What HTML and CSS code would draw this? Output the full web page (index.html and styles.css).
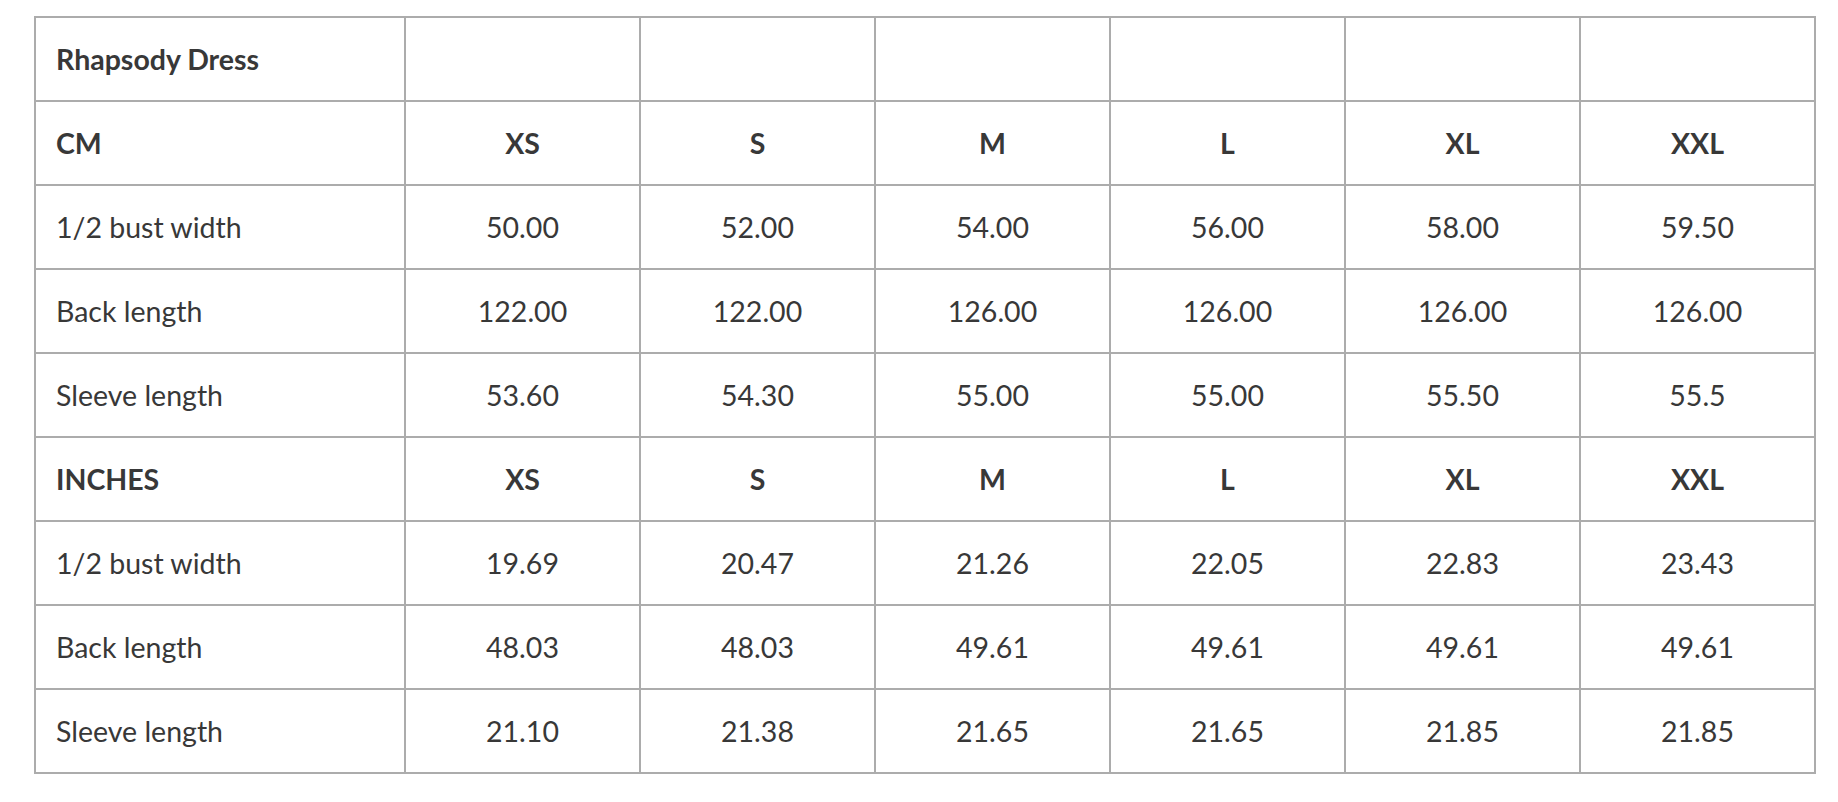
FILE: index.html
```html
<!DOCTYPE html>
<html>
<head>
<meta charset="utf-8">
<link rel="stylesheet" href="styles.css">
</head>
<body>
<div class="page">
<table class="size-table">
  <colgroup>
    <col class="c-label"><col class="c-size"><col class="c-size"><col class="c-size"><col class="c-size"><col class="c-size"><col class="c-size">
  </colgroup>
  <tbody>
    <tr><td class="head">Rhapsody Dress</td><td></td><td></td><td></td><td></td><td></td><td></td></tr>
    <tr class="head-row"><td>CM</td><td>XS</td><td>S</td><td>M</td><td>L</td><td>XL</td><td>XXL</td></tr>
    <tr><td>1/2 bust width</td><td>50.00</td><td>52.00</td><td>54.00</td><td>56.00</td><td>58.00</td><td>59.50</td></tr>
    <tr><td>Back length</td><td>122.00</td><td>122.00</td><td>126.00</td><td>126.00</td><td>126.00</td><td>126.00</td></tr>
    <tr><td>Sleeve length</td><td>53.60</td><td>54.30</td><td>55.00</td><td>55.00</td><td>55.50</td><td>55.5</td></tr>
    <tr class="head-row"><td>INCHES</td><td>XS</td><td>S</td><td>M</td><td>L</td><td>XL</td><td>XXL</td></tr>
    <tr><td>1/2 bust width</td><td>19.69</td><td>20.47</td><td>21.26</td><td>22.05</td><td>22.83</td><td>23.43</td></tr>
    <tr><td>Back length</td><td>48.03</td><td>48.03</td><td>49.61</td><td>49.61</td><td>49.61</td><td>49.61</td></tr>
    <tr><td>Sleeve length</td><td>21.10</td><td>21.38</td><td>21.65</td><td>21.65</td><td>21.85</td><td>21.85</td></tr>
  </tbody>
</table>
</div>
</body>
</html>
```

FILE: styles.css
```css
html, body {
  margin: 0;
  padding: 0;
  background: #ffffff;
}

.page {
  padding: 16px 0 0 34px;
}

.size-table {
  border-collapse: collapse;
  table-layout: fixed;
  width: 1782px;
  font-family: Lato, "Open Sans", sans-serif;
  font-size: 28.5px;
  color: #383838;
}

.c-label {
  width: 370px;
}

.c-size {
  width: 235px;
}

.size-table td {
  border: 2px solid #acacac;
  height: 84px;
  padding: 0 20px;
  text-align: center;
  vertical-align: middle;
  box-sizing: border-box;
}

.size-table td:first-child {
  text-align: left;
}

.size-table td.head,
.head-row td {
  font-weight: bold;
}
```
